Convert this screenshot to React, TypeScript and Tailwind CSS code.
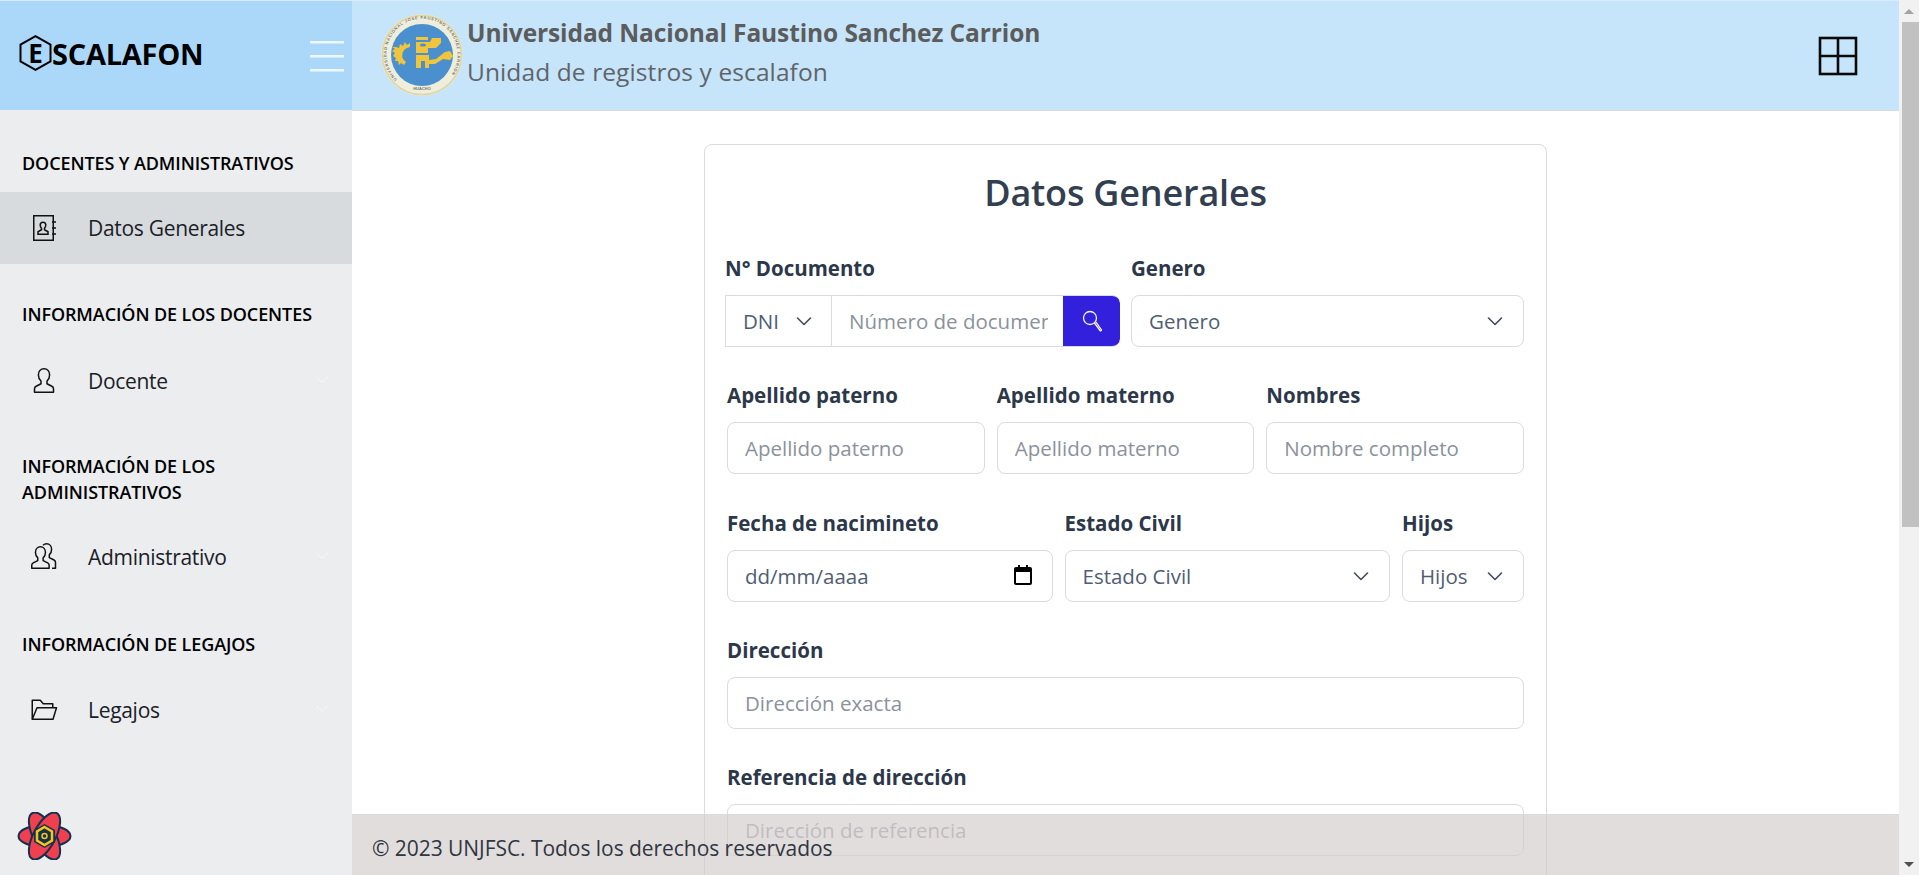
import { ReactNode } from "react";

function Chevron({ className = "" }: { className?: string }) {
    return (
        <svg className={className} width="16" height="16" viewBox="0 0 16 16" fill="none" stroke="#3f4b5e" strokeWidth="1.600" strokeLinecap="round" strokeLinejoin="round">
            <path d="M1.500 5 8 11.500 14.500 5" />
        </svg>
    );
}

function BrandLogo() {
    return (
        <div className="flex items-center text-black font-bold text-[29px] leading-none tracking-[-0.25px] ml-[19px] mb-[5px]">
            <span className="relative flex items-center justify-center w-[33px] h-[36px]">
                <svg className="absolute inset-0" width="33" height="36" viewBox="0 0 33 36" fill="none" stroke="#000" strokeWidth="2">
                    <path d="M16.500 1.200 31.500 9.600v16.800L16.500 34.800 1.500 26.400V9.600z" />
                </svg>
                <span className="relative text-[26px]">E</span>
            </span>
            <span>SCALAFON</span>
        </div>
    );
}

function Seal() {
    return (
        <svg width="84" height="84" viewBox="0 0 84 84">
            <defs>
                <path id="sealArc" d="M17 66.500a35.500 35.500 0 1 1 50 0" />
            </defs>
            <circle cx="42" cy="42" r="41" fill="#e9e6d3" />
            <circle cx="42" cy="42" r="39.500" fill="#efeedd" stroke="#dcd5a6" strokeWidth="1.500" />
            <text fontSize="4" fontFamily="Liberation Sans, sans-serif" fontWeight="700" fill="#77766a">
                <textPath href="#sealArc" startOffset="0" textLength="160">UNIVERSIDAD NACIONAL JOSÉ FAUSTINO SÁNCHEZ CARRIÓN</textPath>
            </text>
            <text x="42" y="77" textAnchor="middle" fontSize="4" fontFamily="Liberation Sans, sans-serif" fontWeight="700" fill="#77766a">HUACHO</text>
            <circle cx="42" cy="42" r="31" fill="#4a90cf" />
            <g fill="#f0c53c">
                <path d="M16 34l3 1 1-4 3 2 2-4 2 3 3-2 0 4-3 1a8 8 0 0 0 -4 11l3 3-2 3-3-2-2 2-1-4-3 0 1-3-3-2 2-3-3-2 3-2-3-2z" />
                <rect x="36" y="24" width="12" height="3" />
                <path d="M36 29h14l2-4h9v5l-5 5h-8v5h-12z" />
                <path d="M36 42h13v13h-4v-7h-4v7h-5z" />
                <path d="M49 47l7-1 9-7 5-1 3 5-3 4-7-1-8 5h-6z" />
            </g>
            <ellipse cx="43" cy="32" rx="3" ry="1.500" fill="#4a90cf" />
        </svg>
    );
}

function ContactIcon() {
    return (
        <svg width="26" height="28" viewBox="0 0 26 28" fill="none" stroke="#111" strokeWidth="1.500">
            <rect x="2.750" y="1.750" width="19.500" height="24.500" />
            <path d="M21 8h4M21 14h4M21 20h4" />
            <path d="M7 20.250v-2.500l3.500-2v-1.500c-1-1-1.300-2-1.300-3.200 0-1.700 1.100-2.800 2.800-2.800s2.800 1.100 2.800 2.800c0 1.200-.3 2.200-1.300 3.200v1.500l3.500 2v2.500z" />
        </svg>
    );
}

function UserIcon() {
    return (
        <svg width="24" height="28" viewBox="0 0 24 28" fill="none" stroke="#111" strokeWidth="1.500" strokeLinejoin="round">
            <path d="M2.500 25.250v-3.500c0-1.200.7-2 1.700-2.500l4.800-2.500v-2.700c-1.700-1.500-2.600-3.300-2.600-6 0-3.600 2.200-6.300 5.600-6.300s5.600 2.700 5.600 6.300c0 2.700-.9 4.500-2.600 6v2.700l4.800 2.500c1 .5 1.700 1.300 1.700 2.500v3.500z" />
        </svg>
    );
}

function UsersIcon() {
    return (
        <svg width="28" height="28" viewBox="0 0 28 28" fill="none" stroke="#111" strokeWidth="1.500" strokeLinejoin="round">
            <path d="M1.750 25.250v-3c0-1 .6-1.800 1.500-2.300l4.500-2.400v-2.700c-1.500-1.400-2.300-3-2.300-5.300 0-3.300 2-5.800 5-5.800s5 2.500 5 5.800c0 2.300-.8 3.900-2.300 5.300v2.700l4.500 2.400c.9.500 1.500 1.300 1.500 2.300v3z" />
            <path d="M13 2.200c1-.9 2.200-1.400 3.600-1.400 3 0 5 2.500 5 5.800 0 2.300-.8 3.900-2.300 5.300v2.700l4.700 2.400c.9.500 1.500 1.300 1.500 2.300v6h-3.500" />
        </svg>
    );
}

function FolderIcon() {
    return (
        <svg width="28" height="24" viewBox="0 0 28 24" fill="none" stroke="#111" strokeWidth="1.500" strokeLinejoin="round">
            <path d="M2.250 21.250V2.250h8l3 3.500h9.500v4" />
            <path d="M2.250 21.250 7 9.750h19.500l-3.500 11.500z" />
        </svg>
    );
}

function SideHeading({ children, className = "" }: { children: ReactNode; className?: string }) {
    return <div className={`px-[22px] text-[18px] leading-[26px] font-semibold text-black tracking-[-0.1px] ${className}`}>{children}</div>;
}

function SideItem({ icon, label, active, caret }: { icon: ReactNode; label: string; active?: boolean; caret?: boolean }) {
    return (
        <div className={`flex items-center h-[72px] ${active ? "bg-[#d8dbde]" : ""}`}>
            <span className="w-[88px] flex justify-center">{icon}</span>
            <span className="text-[#1b2027] text-[21px] tracking-[-0.3px] flex-1 pt-[1px]">{label}</span>
            {caret && (
                <svg className="mr-[24px] mb-[2px]" width="12" height="8" viewBox="0 0 12 8" fill="none" stroke="#f7f8f9" strokeWidth="1">
                    <path d="M.5 1 6 6.500 11.500 1" />
                </svg>
            )}
        </div>
    );
}

function Field({ label, className = "", children }: { label: string; className?: string; children: ReactNode }) {
    return (
        <div className={className}>
            <label className="block text-[#2c384a] text-[20.500px] leading-[26px] font-bold mb-[14px]">{label}</label>
            {children}
        </div>
    );
}

const inputClass =
    "block w-full h-[52px] px-[17px] rounded-[8px] border border-[#d8dbe0] bg-white text-[20.500px] text-[#4f5d73] placeholder:text-[#8a929c] outline-none";

function FakeSelect({ text }: { text: string }) {
    return (
        <div className="relative flex items-center h-[52px] px-[17px] rounded-[8px] border border-[#d8dbe0] bg-white text-[20.500px] text-[#4f5d73]">
            {text}
            <Chevron className="absolute right-[20px] top-[17px]" />
        </div>
    );
}

export default function App() {
    return (
        <div className="relative h-[875px] w-[1919px] overflow-hidden flex bg-white font-['Open_Sans',sans-serif]">
            {/* sidebar */}
            <aside className="w-[352px] shrink-0 flex flex-col bg-[#ebedef]">
                <div className="h-[110px] shrink-0 flex items-center justify-between bg-[#abd8f9] border-t border-[#d8ecfc]">
                    <BrandLogo />
                    <svg className="mr-[8px]" width="34" height="32" viewBox="0 0 34 32" fill="#eef7fe">
                        <rect y="1" width="34" height="2.500" />
                        <rect y="15" width="34" height="2.500" />
                        <rect y="29" width="34" height="2.500" />
                    </svg>
                </div>
                <SideHeading className="pt-[40px] pb-[16px]">DOCENTES Y ADMINISTRATIVOS</SideHeading>
                <SideItem icon={<ContactIcon />} label="Datos Generales" active />
                <SideHeading className="pt-[37px] pb-[18px]">INFORMACIÓN DE LOS DOCENTES</SideHeading>
                <SideItem icon={<UserIcon />} label="Docente" caret />
                <SideHeading className="pt-[36px] pb-[16px]">INFORMACIÓN DE LOS ADMINISTRATIVOS</SideHeading>
                <SideItem icon={<UsersIcon />} label="Administrativo" caret />
                <SideHeading className="pt-[38px] pb-[17px]">INFORMACIÓN DE LEGAJOS</SideHeading>
                <SideItem icon={<FolderIcon />} label="Legajos" caret />
                <div className="mt-auto pb-[15px] pl-[17px]">
                    <svg width="55" height="48" viewBox="0 0 55 48">
                        <g fill="#f0404f" stroke="#12304f" strokeWidth="2">
                            <ellipse cx="27.500" cy="24" rx="26" ry="11" />
                            <ellipse cx="27.500" cy="24" rx="26" ry="11" transform="rotate(62 27.500 24)" />
                            <ellipse cx="27.500" cy="24" rx="26" ry="11" transform="rotate(-62 27.500 24)" />
                        </g>
                        <path d="M27.500 12 38 18v12l-10.500 6L17 30V18z" fill="#12304f" />
                        <path d="M27.500 15 35 19.500v9L27.500 33 20 28.500v-9z" fill="none" stroke="#f5c518" strokeWidth="2.500" />
                        <circle cx="27.500" cy="24" r="2.500" fill="none" stroke="#f5c518" strokeWidth="1.500" />
                    </svg>
                </div>
            </aside>

            {/* right side */}
            <div className="relative flex-1 flex flex-col min-w-0">
                <header className="h-[111px] shrink-0 flex items-center bg-[#c6e5fb] border-t border-[#d8ecfc] border-b border-b-[#d8dbe0]">
                    <div className="ml-[28px] mr-[3px] mb-[2px]">
                        <Seal />
                    </div>
                    <div className="flex-1 mb-[5px]">
                        <div className="text-[24.500px] leading-[38px] font-bold text-[#5c5c5c] tracking-[-0.1px]">Universidad Nacional Faustino Sanchez Carrion</div>
                        <div className="text-[24.500px] leading-[40px] text-[#5f6468] tracking-[0.1px]">Unidad de registros y escalafon</div>
                    </div>
                    <svg className="mr-[41px]" width="40" height="40" viewBox="0 0 40 40" fill="none" stroke="#0a0a0a" strokeWidth="2.600">
                        <rect x="2" y="2" width="36" height="36" />
                        <path d="M20 2v36M2 20h36" />
                    </svg>
                </header>

                <main className="flex-1 overflow-hidden flex justify-center pt-[33px]">
                    <div className="w-[843px] h-[900px] shrink-0 rounded-[8px] border border-[#d8dbe0] px-[22px]">
                        <h1 className="text-center text-[36px] leading-[50px] font-semibold text-[#323f50] tracking-[-0.2px] mt-[23px] mb-[37px]">Datos Generales</h1>

                        <div className="flex gap-[11px] mb-[35px]">
                            <Field label="N° Documento" className="w-[395px] -ml-[2px]">
                                <div className="flex h-[52px] rounded-r-[8px] border border-[#d8dbe0] border-r-0 overflow-hidden">
                                    <div className="relative w-[106px] shrink-0 flex items-center pl-[17px] border-r border-[#d8dbe0] text-[20.500px] text-[#4f5d73]">
                                        DNI
                                        <Chevron className="absolute right-[19px] top-[17px]" />
                                    </div>
                                    <input placeholder="Número de documento" className="flex-1 min-w-0 pl-[17px] pr-[15px] text-[20.500px] placeholder:text-[#8a929c] outline-none" />
                                    <button className="w-[57px] shrink-0 -my-px flex items-center justify-center bg-[#3220dc] rounded-r-[8px]">
                                        <svg width="22" height="24" viewBox="0 0 22 24" fill="none" stroke="#f4f4ff" strokeWidth="1.300">
                                            <circle cx="9" cy="9" r="6.500" />
                                            <path d="M13.500 14 19 21.500c.6.8 1.800.2 1.400-.8L15 13" />
                                        </svg>
                                    </button>
                                </div>
                            </Field>
                            <Field label="Genero" className="flex-1">
                                <FakeSelect text="Genero" />
                            </Field>
                        </div>

                        <div className="flex gap-[12px] mb-[36px]">
                            <Field label="Apellido paterno" className="flex-1">
                                <input placeholder="Apellido paterno" className={inputClass} />
                            </Field>
                            <Field label="Apellido materno" className="flex-1">
                                <input placeholder="Apellido materno" className={inputClass} />
                            </Field>
                            <Field label="Nombres" className="flex-1">
                                <input placeholder="Nombre completo" className={inputClass} />
                            </Field>
                        </div>

                        <div className="flex gap-[12px] mb-[35px]">
                            <Field label="Fecha de nacimineto" className="flex-1">
                                <div className="relative">
                                    <input defaultValue="dd/mm/aaaa" className={inputClass} />
                                    <svg className="absolute right-[21px] top-[15px]" width="18" height="20" viewBox="0 0 18 20">
                                        <path d="M4 0h2v2h6V0h2v2h2a2 2 0 0 1 2 2v14a2 2 0 0 1-2 2H2a2 2 0 0 1-2-2V4a2 2 0 0 1 2-2h2z" fill="#000" />
                                        <rect x="2" y="7" width="14" height="11" fill="#fff" />
                                    </svg>
                                </div>
                            </Field>
                            <Field label="Estado Civil" className="flex-1">
                                <FakeSelect text="Estado Civil" />
                            </Field>
                            <Field label="Hijos" className="w-[122px] shrink-0">
                                <FakeSelect text="Hijos" />
                            </Field>
                        </div>

                        <div className="mb-[35px]">
                            <Field label="Dirección">
                                <input placeholder="Dirección exacta" className={inputClass} />
                            </Field>
                        </div>

                        <Field label="Referencia de dirección">
                            <input placeholder="Dirección de referencia" className={inputClass} />
                        </Field>
                    </div>
                </main>

                <footer className="absolute left-0 right-0 bottom-0 h-[61px] flex items-center pl-[20px] pt-[7px] bg-[#d6cece]/70 border-t border-[#d8dbe0] text-[21px] tracking-[-0.05px] text-[#2f3640]">
                    © 2023 UNJFSC. Todos los derechos reservados
                </footer>
            </div>

            {/* page scrollbar */}
            <div className="relative w-[20px] shrink-0 bg-[#f1f1f1] flex flex-col items-center">
                <div className="h-[22px] flex items-center justify-center">
                    <span className="w-0 h-0 border-x-[5px] border-x-transparent border-b-[5px] border-b-[#a3a3a3]" />
                </div>
                <div className="w-[17px] ml-[2px] h-[505px] bg-[#c1c1c1]" />
                <div className="mt-auto h-[22px] flex items-center justify-center">
                    <span className="w-0 h-0 border-x-[5px] border-x-transparent border-t-[5px] border-t-[#505050]" />
                </div>
            </div>
        </div>
    );
}
